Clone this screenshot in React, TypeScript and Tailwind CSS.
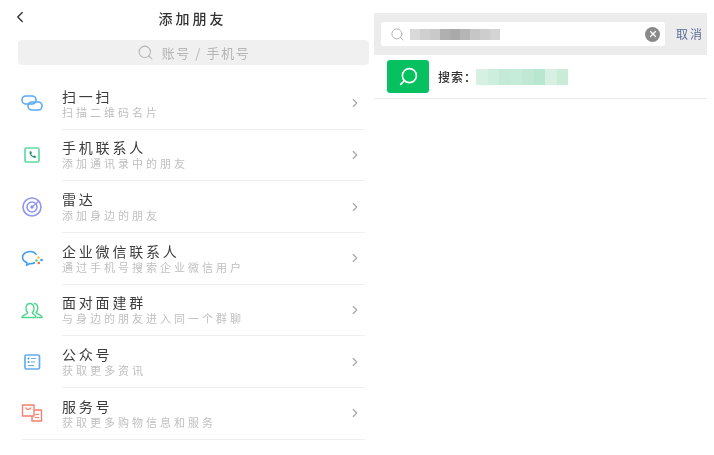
import { ChevronLeft, ChevronRight, Search, X } from 'lucide-react'
import type { ReactNode } from 'react'

const font = { fontFamily: '"Noto Sans CJK SC", "Noto Sans", sans-serif' }

// 七个入口的图标
const ScanIcon = (
  <svg width="24" height="18" viewBox="0 0 24 18" fill="none" stroke="#5aa9f5" strokeWidth="1.6">
    <rect x="2" y="2" width="14" height="8" rx="4" />
    <rect x="8" y="8" width="14" height="8" rx="4" />
  </svg>
)

const PhoneIcon = (
  <svg width="18" height="18" viewBox="0 0 18 18" fill="none">
    <rect x="2" y="2" width="14" height="14" rx="1.5" stroke="#62d9a6" strokeWidth="1.7" />
    <path d="M6.5 5.5c0 3.5 2.500 6 6 6.500l.5-1.800-2-.8-.8.8c-1-.5-1.700-1.200-2.100-2.200l.8-.8-.7-1.900z" fill="#17925f" />
  </svg>
)

const RadarIcon = (
  <svg width="22" height="22" viewBox="0 0 22 22" fill="none" stroke="#8f95f2">
    <circle cx="11" cy="11" r="9" strokeWidth="1.6" />
    <circle cx="11" cy="11" r="5" strokeWidth="1.6" />
    <circle cx="11" cy="11" r="1.8" fill="#8f95f2" stroke="none" />
    <path d="M11 11l7-6" strokeWidth="1.200" />
  </svg>
)

const WeComIcon = (
  <svg width="24" height="18" viewBox="0 0 24 18" fill="none">
    <path d="M15 13.500c-1.700 1-3.500 1.300-5.300 1.100l-3 1.500.3-2.400C4 12.300 2.500 10.500 2.500 8.500 2.500 5 6 2.500 10 2.500c3 0 5.500 1.300 6.500 3.500" stroke="#3d9cf0" strokeWidth="1.500" />
    <circle cx="18.500" cy="8.500" r="1.300" fill="#f5c542" />
    <circle cx="21.500" cy="11" r="1.300" fill="#3d9cf0" />
    <circle cx="16.500" cy="11.500" r="1.300" fill="#5bcf8a" />
    <circle cx="18.800" cy="14" r="1.300" fill="#f0703c" />
  </svg>
)

const FaceIcon = (
  <svg width="24" height="18" viewBox="0 0 24 18" fill="none" stroke="#4fd68f" strokeWidth="1.400">
    <path d="M2 16.500h14c.4-2.600-3.200-3-3.700-4.700 1.500-1.500 2-3 1.700-5C13.600 4 11.800 2.500 10 2.500S6.300 4 6 6.800c-.3 2 .3 3.500 1.800 5C7.200 13.500 1.800 14 2 16.500z" />
    <path d="M14 2.500c1.800 0 3.500 1.500 3.800 4 .2 2-.3 3.500-1.800 5 .6 1.600 6.200 2 6 5h-5" />
  </svg>
)

const ArticleIcon = (
  <svg width="18" height="18" viewBox="0 0 18 18" fill="none">
    <rect x="2" y="2" width="14.500" height="14" rx="1.500" stroke="#62aef5" strokeWidth="1.700" />
    <path d="M8 5.500h5M8 9h4M5 12.500h6" stroke="#62aef5" strokeWidth="1" />
    <circle cx="5.500" cy="5.500" r="1" fill="#3d94ea" />
    <circle cx="5.500" cy="9" r="1" fill="#3d94ea" />
  </svg>
)

const ServiceIcon = (
  <svg width="22" height="20" viewBox="0 0 22 20" fill="none" stroke="#f7806f" strokeWidth="1.400">
    <path d="M1.500 2h11.500v11H1.500z" />
    <path d="M4.500 4.500c.8 1.500 1.800 2 2.800 2s2-.5 2.800-2" />
    <path d="M13 7h7.500v11H11v-5" />
    <path d="M14 11.500h4M14 14.500h4" strokeWidth="1" />
  </svg>
)

const rows: { icon: ReactNode; title: string; sub: string; divider: string }[] = [
  { icon: ScanIcon, title: '扫一扫', sub: '扫描二维码名片', divider: 'ml-[62px]' },
  { icon: PhoneIcon, title: '手机联系人', sub: '添加通讯录中的朋友', divider: 'ml-[62px]' },
  { icon: RadarIcon, title: '雷达', sub: '添加身边的朋友', divider: 'ml-[62px]' },
  { icon: WeComIcon, title: '企业微信联系人', sub: '通过手机号搜索企业微信用户', divider: 'ml-[62px]' },
  { icon: FaceIcon, title: '面对面建群', sub: '与身边的朋友进入同一个群聊', divider: 'ml-[62px]' },
  { icon: ArticleIcon, title: '公众号', sub: '获取更多资讯', divider: 'ml-[62px]' },
  { icon: ServiceIcon, title: '服务号', sub: '获取更多购物信息和服务', divider: 'ml-[22px]' },
]

// 打码的色块
const greyBlocks = ['#d9d9d9', '#cfcfcf', '#c9c9c9', '#b0b0b0', '#a9a9a9', '#b5b5b5', '#c6c6c6', '#cdcdcd', '#d4d4d4']
const greenBlocks = ['#d6f0e2', '#cdeede', '#c4ead7', '#c6ebd8', '#c0e8d4', '#b9e6cf', '#d6f1e4', '#c9ecd9']

export default function App() {
  return (
    <div className="flex w-[714px] h-[455px] bg-white overflow-hidden blur-[0.5px]" style={font}>
      {/* 左边：添加朋友 */}
      <div className="w-[374px] shrink-0">
        <div className="relative h-[36px] flex items-center justify-center">
          <ChevronLeft className="absolute left-[11px] top-[6px] w-[18px] h-[22px] text-[#333]" strokeWidth={1.8} />
          <span className="text-[14px] leading-none font-medium tracking-[3px] text-[#333] ml-[11px]">添加朋友</span>
        </div>
        <div className="ml-[18px] mr-[5px] mt-[4px] h-[25px] rounded-[4px] bg-[#f0f0f0] flex items-center justify-center text-[#b5b5b5]">
          <Search className="w-[17px] h-[17px] mr-[8px]" strokeWidth={1.500} />
          <span className="text-[13px] leading-none tracking-[1.6px]">账号 / 手机号</span>
        </div>
        <div className="mt-[13px] pr-[9px]">
          {rows.map((row) => (
            <div key={row.title} className="h-[51.67px] flex flex-col">
              <div className="flex-1 flex items-center pr-[3px]">
                <div className="w-[62px] pl-[6px] pr-[4px] shrink-0 flex justify-center">{row.icon}</div>
                <div className="flex-1 flex flex-col">
                  <span className="text-[14px] leading-[16px] tracking-[2.8px] text-[#3c3c3c]">{row.title}</span>
                  <span className="text-[11px] leading-[14px] tracking-[3px] text-[#c0c0c0] mt-[1px]">{row.sub}</span>
                </div>
                <ChevronRight className="w-[14px] h-[16px] text-[#a8a8a8]" strokeWidth={2} />
              </div>
              <div className={`h-px bg-[#efefef] ${row.divider}`} />
            </div>
          ))}
        </div>
      </div>

      {/* 右边：搜索结果 */}
      <div className="w-[333px] shrink-0 pt-[13px]">
        <div className="h-[42px] bg-[#ececec] flex items-center pl-[7px]">
          <div className="w-[284px] h-[24px] rounded-[3px] bg-white flex items-center pl-[9px] pr-[5px]">
            <Search className="w-[15px] h-[15px] text-[#b0b0b0]" strokeWidth={1.500} />
            <div className="flex ml-[5px] h-[11px] blur-[0.5px]">
              {greyBlocks.map((color, i) => (
                <div key={i} className="w-[10px]" style={{ backgroundColor: color }} />
              ))}
            </div>
            <div className="ml-auto w-[15px] h-[15px] rounded-full bg-[#8a8a8a] flex items-center justify-center">
              <X className="w-[10px] h-[10px] text-white" strokeWidth={3} />
            </div>
          </div>
          <span className="ml-[11px] text-[12px] leading-none tracking-[2px] text-[#5b6f9a] whitespace-nowrap">取消</span>
        </div>
        <div className="h-[44px] border-b border-[#e9e9e9] flex items-center pl-[13px]">
          <div className="w-[42px] h-[33px] rounded-[3px] bg-[#07c160] flex items-center justify-center">
            <Search className="w-[21px] h-[21px] text-white -scale-x-100" strokeWidth={1.800} />
          </div>
          <span className="ml-[9px] text-[12px] leading-none font-medium tracking-[1px] text-[#333]">搜索：</span>
          <div className="flex -ml-[1px] h-[16px] blur-[0.5px]">
            {greenBlocks.map((color, i) => (
              <div key={i} className="w-[11.500px]" style={{ backgroundColor: color }} />
            ))}
          </div>
        </div>
      </div>
    </div>
  )
}
